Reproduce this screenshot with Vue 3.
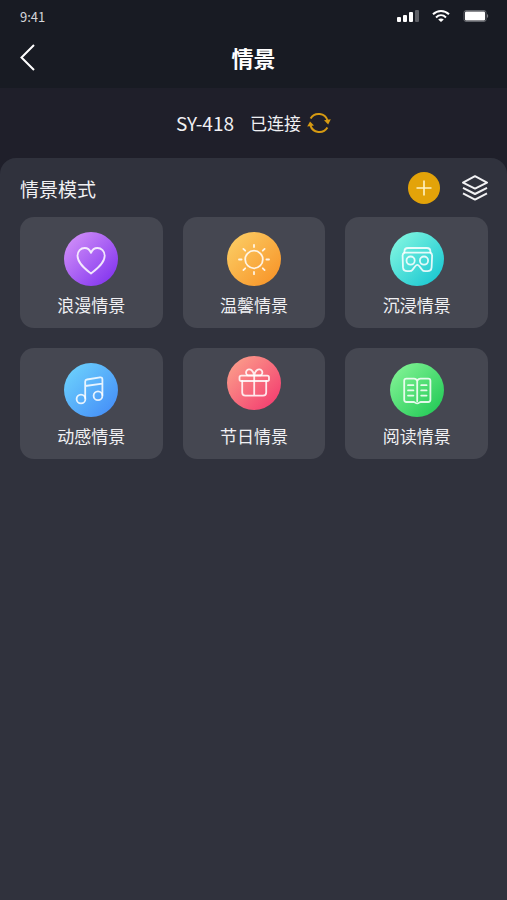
<script setup>
import { ref } from 'vue'

const deviceName = ref('SY-418')
const status = ref('已连接')

// 情景列表
const scenes = ref([
  { id: 'romantic', name: '浪漫情景' },
  { id: 'warm', name: '温馨情景' },
  { id: 'immersive', name: '沉浸情景' },
  { id: 'dynamic', name: '动感情景' },
  { id: 'festival', name: '节日情景' },
  { id: 'reading', name: '阅读情景' }
])

const activeScene = ref(null)

// 选择情景
const selectScene = (scene) => {
  activeScene.value = scene.id
}
</script>

<template>
  <div class="page">
    <header class="header">
      <div class="status-bar">
        <span class="time">9:41</span>
        <div class="status-icons">
          <svg width="23" height="14" viewBox="0 0 23 14" fill="#fff">
            <rect x="1" y="8" width="4" height="5" rx="1" />
            <rect x="7" y="6" width="4" height="7" rx="1" />
            <rect x="13" y="3" width="4" height="10" rx="1" />
            <rect x="19" y="1" width="4" height="12" rx="1" opacity="0.3" />
          </svg>
          <svg width="18" height="14" viewBox="0 0 18 14" fill="none" stroke="#fff" stroke-width="2">
            <path d="M1 5.2C5.6 0.8 12.4 0.8 17 5.2" />
            <path d="M4 8.4C7 5.6 11 5.6 14 8.4" />
            <path d="M9 13L6.2 10.6C7.7 9 10.3 9 11.8 10.6Z" fill="#fff" stroke="none" />
          </svg>
          <svg width="26" height="14" viewBox="0 0 26 14">
            <rect x="1" y="1.5" width="22" height="11" rx="2" fill="none" stroke="#62656b" />
            <rect x="2" y="2.5" width="20" height="9" rx="1" fill="#fff" />
            <path d="M24 5C25.6 5.5 25.6 8.5 24 9Z" fill="#7b7d82" />
          </svg>
        </div>
      </div>
      <div class="nav">
        <button class="icon-btn" type="button" aria-label="返回">
          <svg width="16" height="28" viewBox="0 0 16 28" fill="none" stroke="#fff" stroke-width="2">
            <path d="M14 2L1.5 14.5L14 27" />
          </svg>
        </button>
        <h1>情景</h1>
      </div>
    </header>

    <div class="device">
      <span class="device-name">{{ deviceName }}</span>
      <span class="device-status">{{ status }}</span>
      <button class="icon-btn" type="button" aria-label="刷新">
        <svg width="24" height="24" viewBox="0 -2 24 24" fill="none" stroke="#d69a12" stroke-width="2">
          <path d="M3.6 6.5A9.4 9.4 0 0 1 20.6 8.6" />
          <path d="M20.4 15.5A9.4 9.4 0 0 1 3.4 13.4" />
          <path d="M17 8.2L23.8 7.2L21.2 12.4Z" fill="#d69a12" stroke="none" />
          <path d="M0.2 14.4L3 9.4L7 13.6Z" fill="#d69a12" stroke="none" />
        </svg>
      </button>
    </div>

    <main class="panel">
      <div class="panel-head">
        <h2>情景模式</h2>
        <div class="actions">
          <button class="add-btn" type="button" aria-label="添加">
            <svg width="16" height="16" viewBox="0 0 16 16" stroke="#fff3c4" stroke-width="1.6">
              <path d="M8 0.5V15.5M0.5 8H15.5" />
            </svg>
          </button>
          <button class="icon-btn" type="button" aria-label="图层">
            <svg width="26" height="26" viewBox="0 0 26 26" fill="none" stroke="#f2f2f4" stroke-width="2" stroke-linejoin="round">
              <path d="M13 1.2L25 7.6L13 13.6L1 7.6Z" />
              <path d="M1 12.8L13 19L25 12.8" />
              <path d="M1 18.4L13 24.6L25 18.4" />
            </svg>
          </button>
        </div>
      </div>

      <div class="scene-grid">
        <button
          v-for="scene in scenes"
          :key="scene.id"
          type="button"
          class="scene-card"
          :class="scene.id"
          :aria-pressed="activeScene === scene.id"
          @click="selectScene(scene)"
        >
          <span class="scene-icon">
            <svg width="54" height="54" viewBox="0 0 54 54" fill="none" stroke="#fff" stroke-opacity="0.85" stroke-width="1.8" stroke-linecap="round" stroke-linejoin="round">
              <path v-if="scene.id === 'romantic'" d="M27 41.5C22 37.5 13.5 31.5 13.5 23.8C13.5 19.2 16.8 16 20.6 16C23.4 16 25.8 17.8 27 20.8C28.2 17.8 30.6 16 33.4 16C37.4 16 40.7 19.2 40.7 23.8C40.7 31.5 32 37.5 27 41.5Z" />
              <g v-else-if="scene.id === 'warm'">
                <circle cx="27" cy="27.5" r="8.8" />
                <path d="M27 12.8V15M27 40V42.2M12 27.5H14.6M39.4 27.5H42M16.4 16.9L18.2 18.7M35.8 36.3L37.6 38.1M16.4 38.1L18.2 36.3M35.8 18.7L37.6 16.9" />
              </g>
              <g v-else-if="scene.id === 'immersive'">
                <path d="M14.4 20.6V19.4C14.4 17.2 15.8 16 18 16H36.8C39 16 40.4 17.2 40.4 19.4V20.6" />
                <path d="M14.4 20.6H40.4C41.8 21.4 42.2 22.4 42.1 24L41.6 35.4C41.4 38 39.8 39.2 37.4 39.2H35.4C33.6 39.2 32.6 38.6 31.8 37.4L29.4 34.2C28 32.4 26.6 32.4 25.2 34.2L22.8 37.4C22 38.6 21 39.2 19.2 39.2H17.2C14.8 39.2 13.2 38 13 35.4L12.6 24C12.5 22.4 13 21.4 14.4 20.6Z" />
                <circle cx="20.6" cy="28.6" r="4.1" />
                <circle cx="34" cy="28.6" r="4.1" />
              </g>
              <g v-else-if="scene.id === 'dynamic'">
                <circle cx="17" cy="36" r="4.4" />
                <circle cx="34" cy="32.8" r="4.4" />
                <path d="M21.2 35V18.5C21.2 17.3 21.8 16.7 23 16.5L36 14.4C37.6 14.2 38.4 14.8 38.4 16.4V32M21.2 23L38.4 20.6" />
              </g>
              <g v-else-if="scene.id === 'festival'">
                <rect x="12.5" y="19.6" width="29.5" height="5.4" rx="1.8" />
                <path d="M15.2 25V36.5C15.2 38.6 16.4 39.6 18.4 39.6H36C38 39.6 39.2 38.6 39.2 36.5V25M27.2 19.6V39.6" />
                <path d="M27.2 19.4H20.8C19 18.6 18.6 16.4 19.6 14.8C20.6 13.4 22.8 12.8 24.6 14.2C26.2 15.4 26.8 17.4 27.2 19.4ZM27.2 19.4C27.6 17.4 28.2 15.4 29.8 14.2C31.6 12.8 33.8 13.4 34.8 14.8C35.8 16.4 35.4 18.6 33.6 19.4Z" />
              </g>
              <g v-else>
                <path d="M27.2 18V38.2M27.2 18C26.6 16.2 25.6 15.6 24 15.6H16.4C15 15.6 14.2 16.4 14.2 17.8V36.8C14.2 38.2 15 39 16.4 39H23.6C25 39 25.4 40.4 27.2 40.4C29 40.4 29.4 39 30.8 39H38.2C39.6 39 40.4 38.2 40.4 36.8V17.8C40.4 16.4 39.6 15.6 38.2 15.6H30.6C29 15.6 27.8 16.2 27.2 18Z" />
                <path d="M18 22.2H23.4M18 27.4H23.4M18 32.6H23.4M31.2 22.2H36.6M31.2 27.4H36.6M31.2 32.6H36.6" />
              </g>
            </svg>
          </span>
          <span class="scene-name">{{ scene.name }}</span>
        </button>
      </div>
    </main>
  </div>
</template>

<style>
body {
  margin: 0;
  background-color: #30323d;
}
</style>

<style scoped>
.page {
  display: flex;
  flex-direction: column;
  min-height: 100vh;
  background-color: #1f1f2a;
  color: #f0f0f3;
  font-family: "Noto Sans CJK SC", "Noto Sans", sans-serif;
}

button {
  padding: 0;
  border: none;
  background: none;
  color: inherit;
  font: inherit;
  cursor: pointer;
}

svg {
  display: block;
}

.header {
  background-color: #181b23;
}

.status-bar {
  display: flex;
  justify-content: space-between;
  align-items: center;
  height: 32px;
  padding: 0 18px 0 20px;
}

.time {
  font-size: 13px;
  color: #d4d5d9;
}

.status-icons {
  display: flex;
  align-items: center;
  gap: 13px;
}

.nav {
  display: grid;
  grid-template-columns: 40px 1fr 40px;
  align-items: center;
  height: 50px;
  padding: 0 20px 6px;
}

.icon-btn {
  justify-self: start;
}

h1 {
  margin: 0;
  font-size: 22px;
  font-weight: 700;
  line-height: 32px;
  text-align: center;
  color: #fff;
}

.device {
  display: flex;
  justify-content: center;
  align-items: center;
  height: 68px;
  padding-bottom: 2px;
}

.device-name {
  margin-right: 16px;
  font-size: 19px;
}

.device-status {
  margin-right: 6px;
  font-size: 17px;
}

.panel {
  flex: 1;
  padding: 12px 19px 20px 20px;
  border-radius: 16px 16px 0 0;
  background-color: #30323d;
}

.panel-head {
  display: flex;
  justify-content: space-between;
  align-items: center;
  height: 36px;
  margin-bottom: 11px;
}

h2 {
  margin: 0;
  font-size: 19px;
  font-weight: 400;
}

.actions {
  display: flex;
  align-items: center;
  gap: 22px;
}

.add-btn {
  display: flex;
  justify-content: center;
  align-items: center;
  width: 32px;
  height: 32px;
  border-radius: 50%;
  background-color: #e3a309;
}

.scene-grid {
  display: grid;
  grid-template-columns: repeat(3, 1fr);
  gap: 20px;
}

.scene-card {
  display: flex;
  flex-direction: column;
  align-items: center;
  gap: 7px;
  padding: 15px 0 11px;
  border-radius: 14px;
  background-color: #454751;
}

.scene-icon {
  border-radius: 50%;
}

.scene-name {
  font-size: 17px;
  line-height: 24px;
}

.romantic .scene-icon {
  background: linear-gradient(135deg, #cf8df8 10%, #8436ef 90%);
}

.warm .scene-icon {
  background: linear-gradient(135deg, #fbcb62 10%, #f8962a 90%);
}

.immersive .scene-icon {
  background: linear-gradient(135deg, #7ff5e0 10%, #1bc8d2 90%);
}

.dynamic .scene-icon {
  background: linear-gradient(135deg, #6bcffc 10%, #4690f8 90%);
}

.festival {
  gap: 14px;
  padding-top: 8px;
}

.festival .scene-icon {
  background: linear-gradient(135deg, #fb9c8a 10%, #f43f70 90%);
}

.reading .scene-icon {
  background: linear-gradient(135deg, #7ff293 10%, #25cb58 90%);
}
</style>
